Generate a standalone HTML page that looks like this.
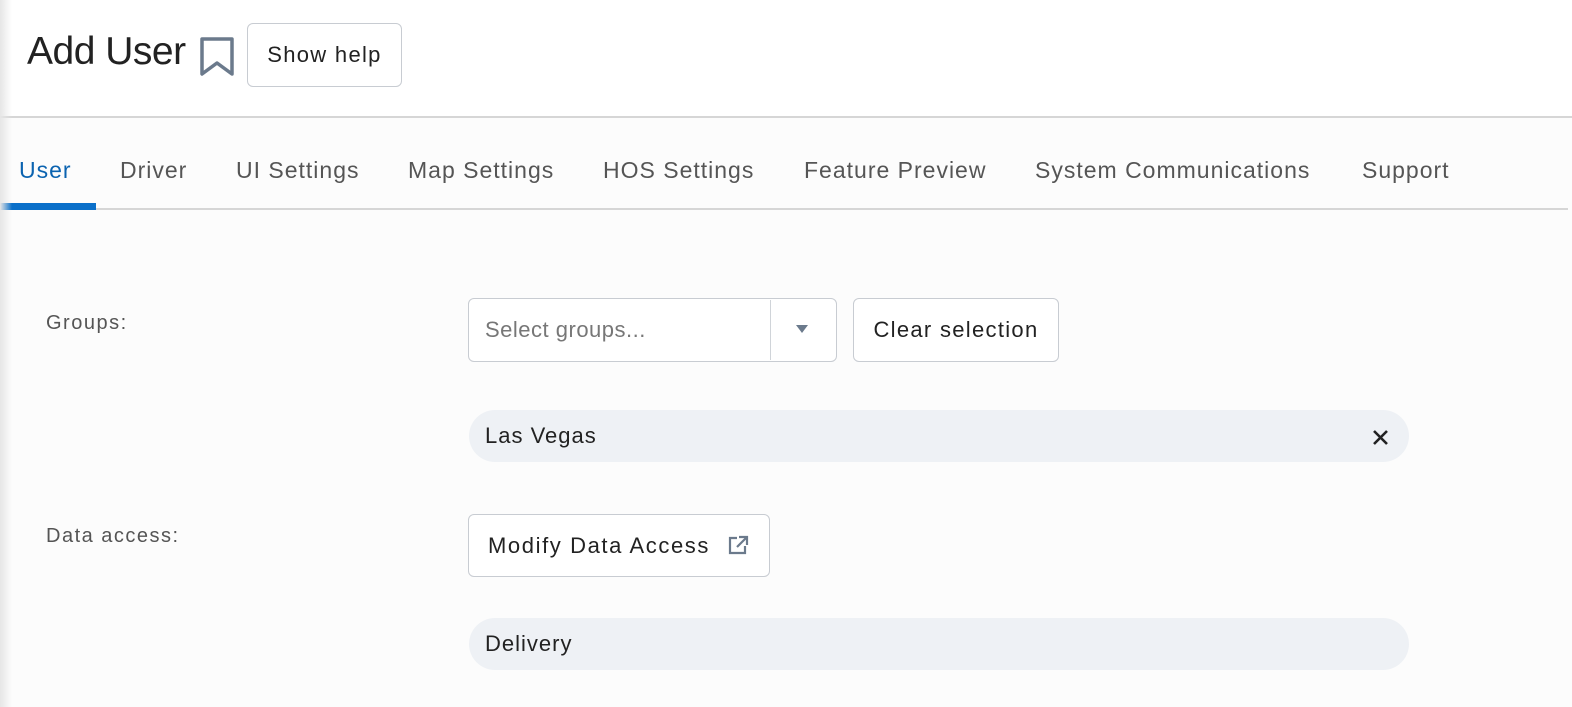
<!DOCTYPE html>
<html><head><style>
body{margin:0;width:1572px;height:707px;overflow:hidden;background:#fcfcfc;font-family:"Liberation Sans",sans-serif;position:relative}
.abs{position:absolute}
.shadow{left:0;top:0;width:12px;height:707px;background:linear-gradient(to right,#e6e6e6,rgba(252,252,252,0))}
.btn{position:absolute;border:1px solid #c8ccd2;border-radius:6px;background:#fff;box-sizing:border-box;color:#222;font-size:22px;display:flex;align-items:center;letter-spacing:1.3px}
.tab{position:absolute;top:157px;font-size:23px;color:#555;letter-spacing:1px}
.lbl{position:absolute;left:46px;font-size:20px;color:#555;letter-spacing:1.5px}
.chip{position:absolute;left:469px;width:940px;height:52px;border-radius:26px;background:#eef1f5;font-size:22px;color:#222;box-sizing:border-box;padding-left:16px;line-height:52px;letter-spacing:1px}
</style></head><body>
<div class="abs" style="left:0;top:0;width:1572px;height:116px;background:#fff"></div>
<div class="abs" style="left:0;top:116px;width:1572px;height:2px;background:#d6d6d6"></div>
<div class="abs" style="left:27px;top:30px;font-size:39px;font-weight:300;color:#222;letter-spacing:-0.5px">Add User</div>
<svg class="abs" style="left:199px;top:36px" width="36" height="41" viewBox="0 0 36 41"><path d="M3 3H33V38L18 27L3 38Z" fill="none" stroke="#6b7a8c" stroke-width="3.5" stroke-linejoin="round"/></svg>
<div class="btn" style="left:247px;top:23px;width:155px;height:64px;justify-content:center">Show help</div>
<div class="tab" style="left:19px;color:#0b63b0">User</div>
<div class="tab" style="left:120px">Driver</div>
<div class="tab" style="left:236px">UI Settings</div>
<div class="tab" style="left:408px">Map Settings</div>
<div class="tab" style="left:603px">HOS Settings</div>
<div class="tab" style="left:804px">Feature Preview</div>
<div class="tab" style="left:1035px">System Communications</div>
<div class="tab" style="left:1362px">Support</div>
<div class="abs" style="left:0;top:208px;width:1568px;height:2px;background:#d6d6d6"></div>
<div class="abs" style="left:0;top:203px;width:96px;height:7px;background:#0a6fc9"></div>
<div class="lbl" style="top:312px">Groups:</div>
<div class="lbl" style="top:525px">Data access:</div>
<div class="btn" style="left:468px;top:298px;width:369px;height:64px;color:#777;padding-left:16px;letter-spacing:0.5px">Select groups...</div>
<div class="abs" style="left:770px;top:300px;width:1px;height:60px;background:#d0d4d9"></div>
<svg class="abs" style="left:795px;top:324px" width="14" height="10"><path d="M1 1H13L7 9Z" fill="#6b7a8c"/></svg>
<div class="btn" style="left:853px;top:298px;width:206px;height:64px;justify-content:center">Clear selection</div>
<div class="chip" style="top:410px">Las Vegas</div>
<svg class="abs" style="left:1372px;top:429px" width="17" height="17"><path d="M2 2L15 15M15 2L2 15" stroke="#222" stroke-width="2.6"/></svg>
<div class="btn" style="left:468px;top:514px;width:302px;height:63px;padding-left:19px;letter-spacing:1.6px">Modify Data Access</div>
<svg class="abs" style="left:727px;top:534px" width="24" height="22" viewBox="0 0 24 22"><path d="M10 4H3V19H18V12" fill="none" stroke="#6b7a8c" stroke-width="2.2"/><path d="M12 3H20V11M20 3L10 13" fill="none" stroke="#6b7a8c" stroke-width="2.2"/></svg>
<div class="chip" style="top:618px">Delivery</div>
<div class="abs shadow"></div>
</body></html>
